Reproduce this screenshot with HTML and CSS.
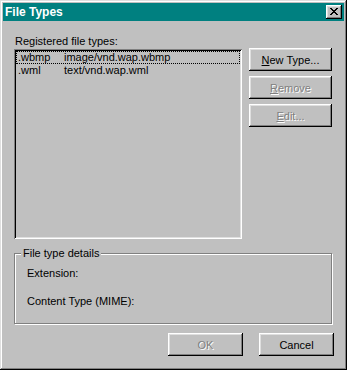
FILE: index.html
```html
<!DOCTYPE html>
<html lang="en">
<head>
  <meta charset="UTF-8">
  <meta name="viewport" content="width=device-width, initial-scale=1.0">
  <title>File Types</title>
  <link rel="stylesheet" href="styles.css">
</head>
<body>

  <div class="window">
    <div class="titlebar">
      <span class="title">File Types</span>
      <button type="button" class="close-btn" aria-label="Close">
        <svg width="8" height="7" viewBox="0 0 8 7" shape-rendering="crispEdges">
          <path fill="#000" d="M0 0h2v1H0zM6 0h2v1H6zM1 1h2v1H1zM5 1h2v1H5zM2 2h4v1H2zM3 3h2v1H3zM2 4h4v1H2zM1 5h2v1H1zM5 5h2v1H5zM0 6h2v1H0zM6 6h2v1H6z"/>
        </svg>
      </button>
    </div>

    <div class="content">
      <div class="top-row">
        <div class="list-col">
          <div class="label">Registered file types:</div>
          <div class="listbox">
            <div class="row focused"><span class="ext">.wbmp</span><span>image/vnd.wap.wbmp</span></div>
            <div class="row"><span class="ext">.wml</span><span>text/vnd.wap.wml</span></div>
          </div>
        </div>
        <div class="side-buttons">
          <button type="button" class="btn"><u>N</u>ew Type...</button>
          <button type="button" class="btn disabled"><u>R</u>emove</button>
          <button type="button" class="btn disabled"><u>E</u>dit...</button>
        </div>
      </div>

      <div class="group">
        <span class="group-title">File type details</span>
        <div class="field">Extension:</div>
        <div class="field second">Content Type (MIME):</div>
      </div>

      <div class="footer">
        <button type="button" class="btn wide disabled">OK</button>
        <button type="button" class="btn wide">Cancel</button>
      </div>
    </div>
  </div>

</body>
</html>
```

FILE: styles.css
```css
/* dialogo estilo Windows 95 */
body {
  margin: 0;
  padding: 0;
  font-family: 'Liberation Sans', Arial, sans-serif;
  font-size: 11px;
  line-height: 13px;
  color: #000;
  background-color: #c0c0c0;
}

.window {
  width: 347px;
  height: 370px;
  box-sizing: border-box;
  padding: 3px;
  background-color: #c0c0c0;
  box-shadow: inset -1px -1px #000, inset 1px 1px #dfdfdf,
              inset -2px -2px #808080, inset 2px 2px #fff;
}

.titlebar {
  height: 18px;
  background-color: #008080;
  display: flex;
  align-items: center;
  justify-content: space-between;
  padding: 0 2px;
}

.title {
  color: #fff;
  font-weight: bold;
  font-size: 12px;
  line-height: 18px;
}

.close-btn {
  width: 16px;
  height: 14px;
  padding: 3px 0 0 4px;
  border: none;
  background-color: #c0c0c0;
  display: flex;
  align-items: flex-start;
  justify-content: flex-start;
  box-sizing: border-box;
  box-shadow: inset -1px -1px #000, inset 1px 1px #fff,
              inset -2px -2px #808080, inset 2px 2px #dfdfdf;
}

.content {
  padding: 14px 12px 0 11px;
}

.top-row {
  display: flex;
  gap: 7px;
}

.list-col {
  width: 228px;
}

.label {
  margin-left: 1px;
  height: 13px;
}

.listbox {
  margin-top: 1px;
  height: 190px;
  box-sizing: border-box;
  padding: 2px;
  background-color: #c0c0c0;
  box-shadow: inset 1px 1px #808080, inset -1px -1px #fff,
              inset 2px 2px #000, inset -2px -2px #dfdfdf;
}

.row {
  display: flex;
  height: 13px;
  padding-left: 2px;
  box-sizing: border-box;
}

.row.focused {
  outline: 1px dotted #000;
  outline-offset: -1px;
}

.ext {
  width: 46px;
}

.side-buttons {
  margin-top: 13px;
  display: flex;
  flex-direction: column;
  gap: 5px;
}

.btn {
  width: 83px;
  height: 23px;
  padding: 0;
  border: none;
  background-color: #c0c0c0;
  font-family: inherit;
  font-size: 11px;
  color: #000;
  box-shadow: inset -1px -1px #000, inset 1px 1px #fff,
              inset -2px -2px #808080, inset 2px 2px #dfdfdf;
}

.btn.wide {
  width: 75px;
}

.btn.disabled {
  color: #808080;
  text-shadow: 1px 1px 0 #fff;
}

.group {
  position: relative;
  margin-top: 14px;
  height: 71px;
  box-sizing: border-box;
  padding: 13px 0 0 12px;
  border: 1px solid #808080;
  box-shadow: inset 1px 1px #fff, 1px 1px #fff;
}

.group-title {
  position: absolute;
  top: -7px;
  left: 6px;
  padding: 0 2px;
  background-color: #c0c0c0;
}

.field.second {
  margin-top: 15px;
}

.footer {
  margin-top: 9px;
  margin-right: -2px;
  display: flex;
  justify-content: flex-end;
  gap: 16px;
}
```
